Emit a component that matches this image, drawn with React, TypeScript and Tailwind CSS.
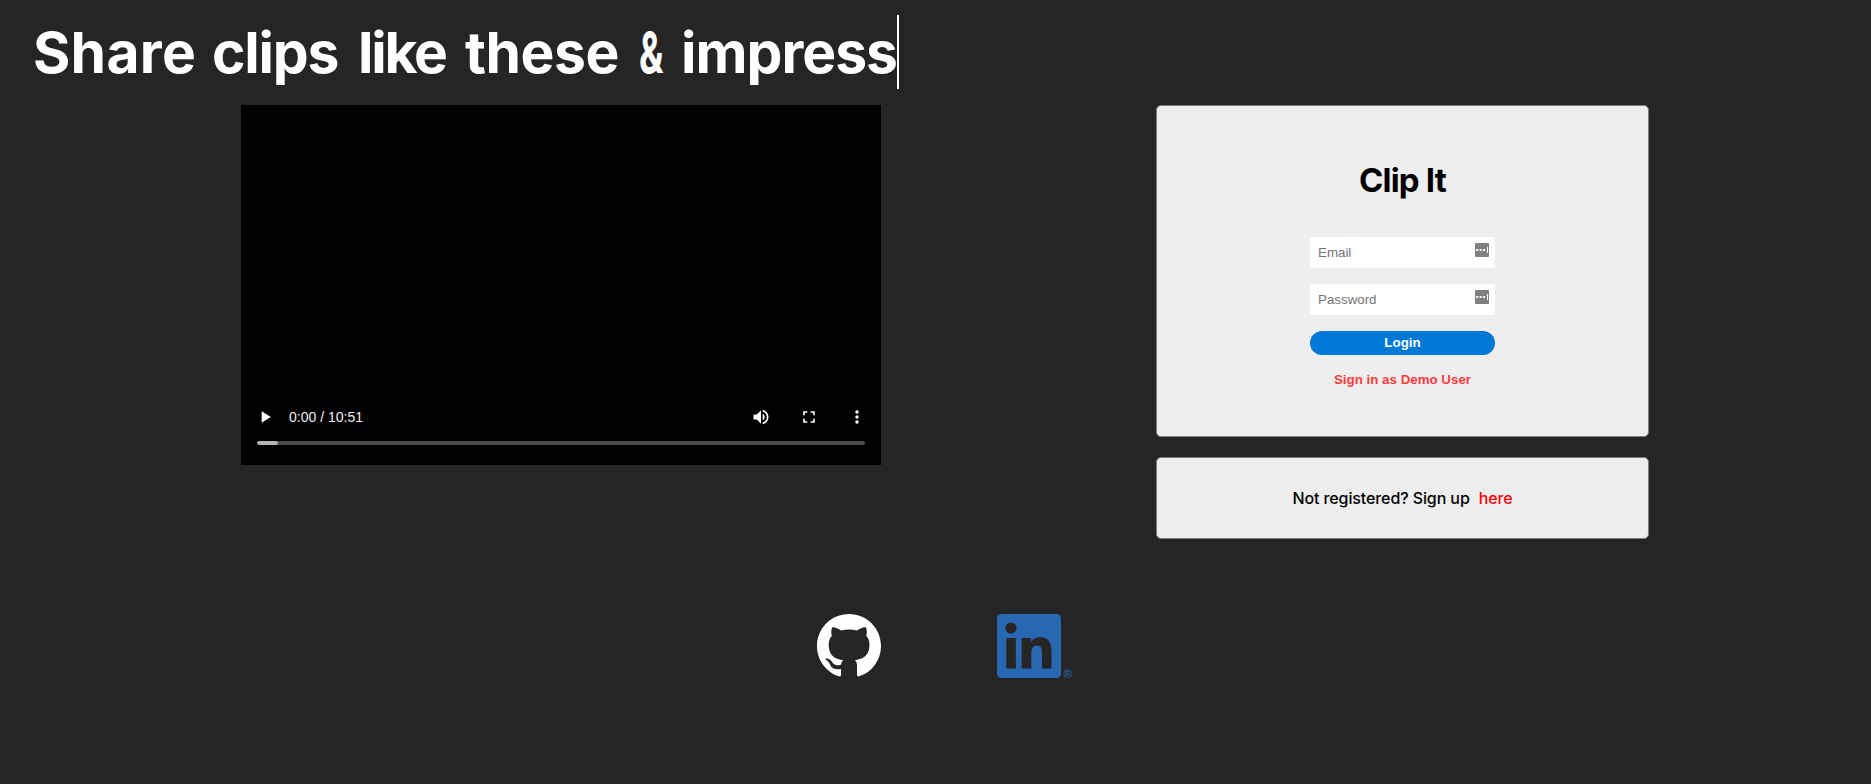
import { MdPlayArrow, MdVolumeUp, MdFullscreen, MdMoreVert } from "react-icons/md";

function Field({ label, type }: { label: string; type: string }) {
  return (
    <div className="flex h-[31px] w-[185px] items-start rounded-[2px] bg-white pl-2 pr-[6px] font-['Liberation_Sans']">
      <input
        type={type}
        placeholder={label}
        className="h-[31px] w-[157px] bg-transparent text-[13.333px] outline-none placeholder:text-[#757575]"
      />
      <svg className="mt-[6px] h-[14px] w-[14px] shrink-0" viewBox="0 0 14 14">
        <rect width="14" height="14" rx="1" fill="#808080" />
        <path d="M1.200 6h2v2h-2zM4.600 6h2v2h-2zM8 6h2v2H8z" fill="#fff" />
        <path d="M12 4h1v6h-1z" fill="#fff" />
      </svg>
    </div>
  );
}

function Video() {
  return (
    <div className="flex h-[360px] w-[640px] shrink-0 flex-col justify-end bg-black px-4 pb-5">
      <div className="mb-[12px] flex h-6 items-center text-white">
        <MdPlayArrow className="-ml-[2px] h-[20px] w-[20px]" />
        <span className="ml-[14px] font-['Liberation_Sans'] text-[14px] leading-none text-[#eee]">0:00 / 10:51</span>
        <MdVolumeUp className="ml-auto h-5 w-5" />
        <MdFullscreen className="ml-[28px] h-5 w-5" />
        <MdMoreVert className="-mr-[2px] ml-[28px] h-5 w-5" />
      </div>
      <div className="flex h-1 overflow-hidden rounded-sm bg-[#4d4d4d]">
        <div className="h-1 w-[21px] rounded-sm bg-[#b3b3b3]" />
      </div>
    </div>
  );
}

function Headline() {
  return (
    <h1 className="flex h-[74px] w-[866px] items-center whitespace-nowrap border-r-2 border-white font-['Inter'] text-[57px] leading-none font-bold text-white">
      <span className="w-[179px] shrink-0 tracking-[0.3px]">Share</span>
      <span className="w-[146px] shrink-0 tracking-[-1.2px]">clips</span>
      <span className="w-[107px] shrink-0 tracking-[-2.2px]">like</span>
      <span className="w-[174px] shrink-0 tracking-[-0.5px]">these</span>
      <span className="w-[42px] shrink-0 origin-left scale-x-[0.64]">&amp;</span>
      <span className="shrink-0 tracking-[-1px]">impress</span>
    </h1>
  );
}

export default function App() {
  return (
    <div className="flex h-[784px] w-full flex-col overflow-hidden bg-[#252525]">
      <header className="pt-[15px] pl-[33px]">
        <Headline />
      </header>
      <main className="mt-4 flex h-[434px] pl-[241px]">
        <Video />
        <div className="ml-[275px] flex w-[493px] flex-col gap-5">
          <form className="flex h-[332px] flex-col items-center rounded-[5px] border border-[#808080] bg-[#eee]">
            <h2 className="mt-[53px] h-[42px] font-['Inter'] text-[33px] leading-[42px] font-bold tracking-[-0.8px] text-black">Clip It</h2>
            <div className="mt-[36px] flex flex-col gap-4">
              <Field label="Email" type="email" />
              <Field label="Password" type="password" />
              <button type="button" className="h-6 rounded-full bg-[#0078d6] font-['Liberation_Sans'] text-[13.333px] leading-6 font-bold text-white">
                Login
              </button>
            </div>
            <button type="button" className="mt-[17px] h-4 font-['Liberation_Sans'] text-[13.333px] leading-4 font-bold text-[#ff3c3c]">
              Sign in as Demo User
            </button>
          </form>
          <div className="flex h-[82px] items-center justify-center rounded-[5px] border border-[#808080] bg-[#eee] font-['Inter'] text-[16px] font-medium tracking-[-0.1px] text-black">
            <span>Not registered? Sign up</span>
            <a className="ml-[9px] text-[#f00]">here</a>
          </div>
        </div>
      </main>
      <footer className="mt-[75px] flex pl-[817px]">
        <svg className="h-16 w-16" viewBox="0 0 16 16" fill="#fff">
          <path d="M8 0C3.58 0 0 3.58 0 8c0 3.54 2.29 6.53 5.47 7.59.4.07.55-.17.55-.38 0-.19-.01-.82-.01-1.49-2.01.37-2.53-.49-2.69-.94-.09-.23-.48-.94-.82-1.13-.28-.15-.68-.52-.01-.53.63-.01 1.08.58 1.23.82.72 1.21 1.87.87 2.33.66.07-.52.28-.87.51-1.07-1.78-.2-3.64-.89-3.64-3.95 0-.87.31-1.59.82-2.15-.08-.2-.36-1.02.08-2.12 0 0 .67-.21 2.2.82.64-.18 1.32-.27 2-.27s1.36.09 2 .27c1.53-1.04 2.2-.82 2.2-.82.44 1.1.16 1.92.08 2.12.51.56.82 1.27.82 2.15 0 3.07-1.87 3.75-3.65 3.95.29.25.54.73.54 1.48 0 1.07-.01 1.93-.01 2.2 0 .21.15.46.55.38A8.01 8.01 0 0 0 16 8c0-4.42-3.58-8-8-8" />
        </svg>
        <svg className="ml-[116px] h-16 w-[76px]" viewBox="0 0 76 64">
          <rect width="64" height="64" rx="4.5" fill="#2867b2" />
          <g fill="#252525">
            <circle cx="14" cy="14" r="5.6" />
            <path d="M9.3 24h9.6v30.500H9.3zM24.700 24h9.200v4.200c1.300-2.400 4.500-5 9.200-5 9.600 0 11.400 6.400 11.400 14.600v16.700h-9.500V39.700c0-3.600-.1-8.100-4.900-8.100s-5.800 3.800-5.800 7.800v15.100h-9.600z" />
          </g>
          <circle cx="70.700" cy="59.700" r="3.900" fill="none" stroke="#2867b2" strokeWidth="0.800" />
          <path d="M69.300 62v-4.600h1.700a1.200 1.200 0 0 1 0 2.500h-1.700m1.600 0 1.400 2.100" fill="none" stroke="#2867b2" strokeWidth="0.800" />
        </svg>
      </footer>
    </div>
  );
}
